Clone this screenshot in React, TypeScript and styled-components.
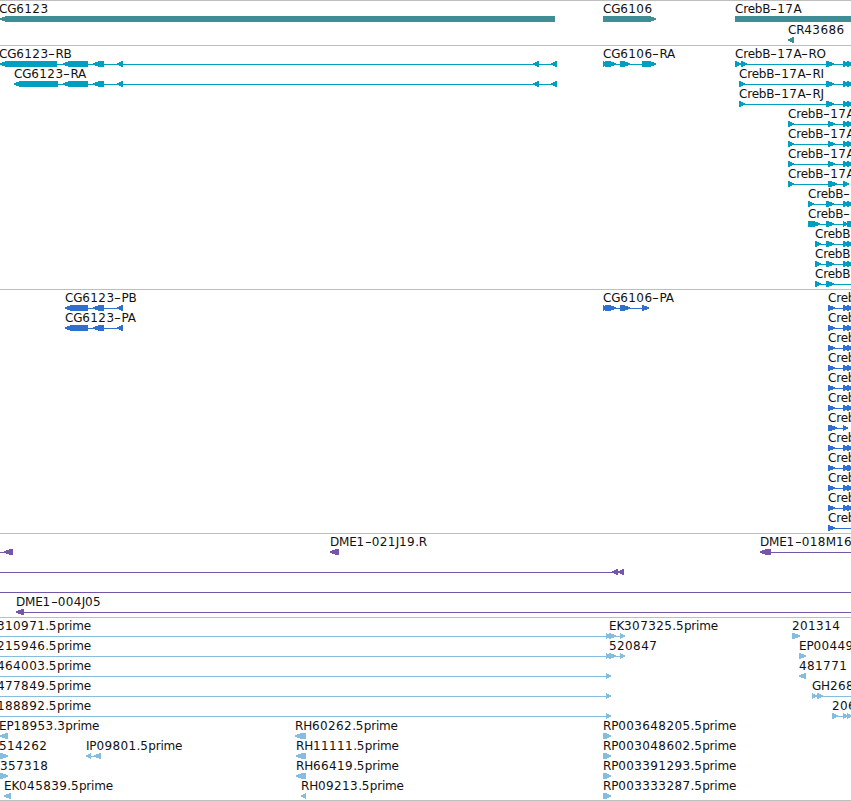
import React from 'react';
import styled, { createGlobalStyle } from 'styled-components';

const GlobalStyle = createGlobalStyle`
  body {
    margin: 0;
    background: #fff;
  }
`;

const Browser = styled.main`
  display: flex;
  flex-direction: column;
  width: 851px;
  height: 801px;
  overflow: hidden;
  color: #000;
  font-family: 'DejaVu Sans', sans-serif;
  font-size: 12px;
  line-height: 15px;
  border-bottom: 1px solid #bebebe;
  box-sizing: border-box;
`;

const Track = styled.section<{ $color: string; $gap?: number; $bottom?: number }>`
  display: flex;
  flex: none;
  flex-direction: column;
  gap: ${({ $gap = 0 }) => $gap}px;
  border-top: 1px solid #bebebe;
  padding-bottom: ${({ $bottom = 3 }) => $bottom}px;
  color: ${({ $color }) => $color};
`;

const Row = styled.div`
  position: relative;
  height: 20px;
`;

const Glyphs = styled.svg`
  display: block;
  width: 851px;
  height: 20px;
  overflow: visible;
  fill: currentColor;
  shape-rendering: crispEdges;
`;

// labels sit at their genomic position, over the row
const Label = styled.span<{ $x: number }>`
  position: absolute;
  top: 1px;
  left: ${({ $x }) => $x}px;
  color: #111;
  white-space: pre;
  letter-spacing: -0.2px;
`;

const Digits = styled.span`
  letter-spacing: 0.4px;
`;

const Dash = styled.span`
  display: inline-block;
  width: 7px;
  transform: scaleX(1.6);
  transform-origin: 0 50%;
`;

type Span = [number, number];

type Feature = {
  name?: string;
  x?: number;
  dir: 'l' | 'r';
  exons: Span[];
  line?: Span;
};

const f = (
  name: string,
  x: number,
  dir: 'l' | 'r',
  exons: Span[],
  line?: Span
): Feature => ({ name, x, dir, exons, line });

const exonPoints = ([a, b]: Span, dir: 'l' | 'r') => {
  const tip = Math.min(6, b - a - 0.5);
  return dir === 'l'
    ? `${a},17.4 ${a + tip},15 ${b},15 ${b},21 ${a + tip},21 ${a},18.6`
    : `${a},15 ${b - tip},15 ${b},17.4 ${b},18.6 ${b - tip},21 ${a},21`;
};

const FeatureLabel = ({ name, x }: { name: string; x: number }) => (
  <Label $x={x}>
    {name.split(/(-|\d+)/).map((part, i) => {
      if (part === '-') return <Dash key={i}>-</Dash>;
      if (/\d/.test(part)) return <Digits key={i}>{part}</Digits>;
      return <React.Fragment key={i}>{part}</React.Fragment>;
    })}
  </Label>
);

const FeatureRow = ({ features }: { features: Feature[] }) => (
  <Row>
    <Glyphs>
      {features.map(({ dir, exons, line }, i) => (
        <g key={i}>
          {line && <rect x={line[0]} y={18} width={line[1] - line[0]} height={1} />}
          {exons.map((exon, j) => (
            <polygon key={j} points={exonPoints(exon, dir)} />
          ))}
        </g>
      ))}
    </Glyphs>
    {features.map(
      ({ name, x = 0 }, i) => name && <FeatureLabel key={i} name={name} x={x} />
    )}
  </Row>
);

const tail: Span[] = [
  [843, 849],
  [847, 854],
];

const genes: Feature[][] = [
  [
    f('CG6123', -1, 'l', [[0, 555]]),
    f('CG6106', 603, 'r', [[603, 656]]),
    f('CrebB-17A', 735, 'r', [[735, 870]]),
  ],
  [f('CR43686', 788, 'l', [[788, 794]])],
];

const cg6123: Span[] = [
  [63, 88],
  [93, 104],
  [117, 123],
  [533, 539],
  [551, 557],
];

const transcripts: Feature[][] = [
  [
    f('CG6123-RB', -1, 'l', [[0, 57], ...cg6123], [0, 557]),
    f('CG6106-RA', 603, 'r', [[603, 607], [605, 616], [620, 630], [642, 656]], [603, 656]),
    f('CrebB-17A-RO', 735, 'r', [[735, 741], [741, 747], [826, 834], ...tail], [735, 851]),
  ],
  [
    f('CG6123-RA', 14, 'l', [[14, 58], ...cg6123], [14, 557]),
    f('CrebB-17A-RI', 739, 'r', [[739, 745], [826, 834], ...tail], [739, 851]),
  ],
  [f('CrebB-17A-RJ', 739, 'r', [[739, 745], [826, 834], ...tail], [739, 851])],
  [f('CrebB-17A', 788, 'r', [[788, 794], [828, 835], ...tail], [788, 851])],
  [f('CrebB-17A', 788, 'r', [[788, 794], [828, 835], ...tail], [788, 851])],
  [f('CrebB-17A', 788, 'r', [[788, 794], [828, 835], ...tail], [788, 851])],
  [f('CrebB-17A', 788, 'r', [[788, 794], [828, 837], [843, 849]], [788, 849])],
  [f('CrebB-', 808, 'r', [[808, 814], [826, 834], ...tail], [808, 851])],
  [f('CrebB-', 808, 'r', [[808, 820], [826, 834], [843, 848], [847, 860]], [808, 851])],
  [f('CrebB', 815, 'r', [[815, 821], [826, 834], ...tail], [815, 851])],
  [f('CrebB', 815, 'r', [[815, 821], [826, 834], ...tail], [815, 851])],
  [f('CrebB', 815, 'r', [[815, 821], [826, 834]], [815, 851])],
];

const creb = (exons: Span[] = tail, first = 835, end = 851) =>
  f('Creb', 828, 'r', [[828, first], ...exons], [828, end]);

const proteins: Feature[][] = [
  [
    f('CG6123-PB', 65, 'l', [[65, 88], [93, 104], [117, 123]], [65, 123]),
    f('CG6106-PA', 603, 'r', [[603, 607], [605, 616], [620, 630], [642, 649]], [603, 649]),
    creb(),
  ],
  [f('CG6123-PA', 65, 'l', [[65, 88], [93, 104], [117, 123]], [65, 123]), creb()],
  [creb()],
  [creb()],
  [creb()],
  [creb()],
  [creb([[843, 848]], 837, 848)],
  [creb()],
  [creb([[843, 849], [847, 855]])],
  [creb()],
  [creb()],
  [creb([])],
];

const bacs: Feature[][] = [
  [
    { dir: 'l', exons: [[4, 13]], line: [0, 13] },
    f('DME1-021J19.R', 330, 'l', [[330, 339]]),
    f('DME1-018M16', 760, 'l', [[760, 771]], [760, 851]),
  ],
  [{ dir: 'l', exons: [[612, 618], [618, 624]], line: [0, 624] }],
  [{ dir: 'l', exons: [], line: [0, 851] }],
  [f('DME1-004J05', 16, 'l', [[16, 24]], [16, 851])],
];

const rp: Span[] = [
  [603, 609],
  [605, 611],
];

const ek: Span[] = [
  [606, 611],
  [609, 616],
  [620, 625],
];

const ests: Feature[][] = [
  [
    f('310971.5prime', -3, 'r', [], [0, 611]),
    f('EK307325.5prime', 609, 'r', ek, [609, 625]),
    f('201314', 792, 'r', [[792, 800]]),
  ],
  [
    f('215946.5prime', -3, 'r', [], [0, 611]),
    f('520847', 609, 'r', ek, [609, 625]),
    f('EP00449', 799, 'r', [[799, 806]]),
  ],
  [
    f('464003.5prime', -3, 'r', [[606, 611]], [0, 611]),
    f('481771', 799, 'l', [[799, 806]]),
  ],
  [
    f('477849.5prime', -3, 'r', [[606, 611]], [0, 611]),
    f('GH268', 812, 'r', [[812, 817], [817, 823]], [812, 851]),
  ],
  [
    f('188892.5prime', -3, 'r', [[606, 611]], [0, 611]),
    f('206', 832, 'r', [[832, 838], [843, 848], [847, 852]], [832, 851]),
  ],
  [
    f('EP18953.3prime', -1, 'l', [[0, 8]]),
    f('RH60262.5prime', 295, 'l', [[295, 306]]),
    f('RP003648205.5prime', 603, 'r', rp),
  ],
  [
    f('514262', -1, 'r', [[0, 8]]),
    f('IP09801.5prime', 86, 'l', [[86, 91], [94, 101]], [86, 101]),
    f('RH11111.5prime', 296, 'l', [[296, 306]]),
    f('RP003048602.5prime', 603, 'r', rp),
  ],
  [
    f('357318', 0, 'r', [[0, 8]]),
    f('RH66419.5prime', 296, 'l', [[296, 306]]),
    f('RP003391293.5prime', 603, 'r', rp),
  ],
  [
    f('EK045839.5prime', 4, 'l', [[4, 11]]),
    f('RH09213.5prime', 301, 'l', [[301, 306]]),
    f('RP003333287.5prime', 603, 'r', rp),
  ],
];

const tracks = [
  { color: '#3e8e93', rows: genes, gap: 1 },
  { color: '#009fbf', rows: transcripts },
  { color: '#2f6fcf', rows: proteins },
  { color: '#7556a8', rows: bacs },
  { color: '#86bcde', rows: ests, bottom: 2 },
];

export default function App() {
  return (
    <>
      <GlobalStyle />
      <Browser>
        {tracks.map(({ color, rows, gap, bottom }) => (
          <Track key={color} $color={color} $gap={gap} $bottom={bottom}>
            {rows.map((features, i) => (
              <FeatureRow key={i} features={features} />
            ))}
          </Track>
        ))}
      </Browser>
    </>
  );
}
